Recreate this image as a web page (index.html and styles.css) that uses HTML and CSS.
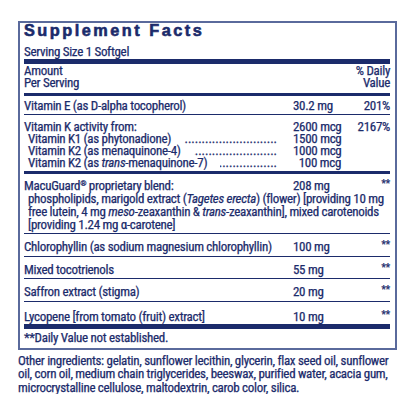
FILE: index.html
```html
<!DOCTYPE html>
<html lang="en">
<head>
<meta charset="utf-8">
<title>Supplement Facts</title>
<link rel="stylesheet" href="styles.css">
</head>
<body>
<div class="panel">
  <h1 class="title">Supplement Facts</h1>
  <div class="serving">Serving Size 1 Softgel</div>
  <div class="bar bar-thick"></div>
  <div class="head">
    <div>Amount<br>Per Serving</div>
    <div class="head-dv">% Daily<br>Value</div>
  </div>
  <div class="bar bar-med bar-head"></div>
  <div class="row row-e line">
    <span class="name">Vitamin E (as D-alpha tocopherol)</span>
    <span class="amt">30.2 mg</span>
    <span class="dv">201%</span>
  </div>
  <div class="group">
    <div class="row tight">
      <span class="name">Vitamin K activity from:</span>
      <span class="amt amt-r">2600 mcg</span>
      <span class="dv">2167%</span>
    </div>
    <div class="row tight">
      <span class="name lead"><span>Vitamin K1 (as phytonadione)</span><span class="dots">................................................................</span></span>
      <span class="amt amt-r">1500 mcg</span>
      <span class="dv"></span>
    </div>
    <div class="row tight">
      <span class="name lead"><span>Vitamin K2 (as menaquinone-4)</span><span class="dots">................................................................</span></span>
      <span class="amt amt-r">1000 mcg</span>
      <span class="dv"></span>
    </div>
    <div class="row tight">
      <span class="name lead"><span>Vitamin K2 (as <i>trans</i>-menaquinone-7)</span><span class="dots">................................................................</span></span>
      <span class="amt amt-r">100 mcg</span>
      <span class="dv"></span>
    </div>
  </div>
  <div class="bar bar-med"></div>
  <div class="blend line">
    <div class="row blend-row">
      <span class="name">MacuGuard<sup>®</sup> proprietary blend:</span>
      <span class="amt">208 mg</span>
      <span class="dv"><span class="star">**</span></span>
    </div>
    <p class="blend-text">phospholipids, marigold extract (<i>Tagetes erecta</i>) (flower) [providing 10 mg free lutein, 4 mg <i>meso</i>-zeaxanthin &amp; <i>trans</i>-zeaxanthin], mixed carotenoids [providing 1.24 mg α-carotene]</p>
  </div>
  <div class="row single line">
    <span class="name">Chlorophyllin (as sodium magnesium chlorophyllin)</span>
    <span class="amt">100 mg</span>
    <span class="dv"><span class="star">**</span></span>
  </div>
  <div class="row single line">
    <span class="name">Mixed tocotrienols</span>
    <span class="amt">55 mg</span>
    <span class="dv"><span class="star">**</span></span>
  </div>
  <div class="row single line">
    <span class="name">Saffron extract (stigma)</span>
    <span class="amt">20 mg</span>
    <span class="dv"><span class="star">**</span></span>
  </div>
  <div class="row single last">
    <span class="name">Lycopene [from tomato (fruit) extract]</span>
    <span class="amt">10 mg</span>
    <span class="dv"><span class="star">**</span></span>
  </div>
  <div class="bar bar-thick bar-foot"></div>
  <div class="foot">**Daily Value not established.</div>
</div>
<p class="other">Other ingredients: gelatin, sunflower lecithin, glycerin, flax seed oil, sunflower oil, corn oil, medium chain triglycerides, beeswax, purified water, acacia gum, microcrystalline cellulose, maltodextrin, carob color, silica.</p>
</body>
</html>
```

FILE: styles.css
```css
html, body {
  margin: 0;
  padding: 0;
  background: #ffffff;
}

body {
  font-family: "Roboto Condensed", "Roboto", sans-serif;
  font-stretch: condensed;
  font-size: 13px;
  line-height: 13px;
  letter-spacing: -0.3px;
  color: #1b2b6b;
  -webkit-text-stroke: 0.25px #1b2b6b;
}

.panel {
  box-sizing: border-box;
  width: 379px;
  margin: 21px 0 0 18px;
  border: 2px solid #5a6a9c;
  padding: 0 5px 4px 4px;
}

.title {
  margin: -1px 0 0 0;
  font-family: "Liberation Sans", Arial, sans-serif;
  font-stretch: normal;
  font-size: 16.3px;
  line-height: 16px;
  font-weight: 700;
  letter-spacing: 2.5px;
  -webkit-text-stroke: 0.6px #1b2b6b;
}

.serving {
  margin-top: 7px;
}

.bar {
  background: #1b2b6b;
}

.bar-thick {
  height: 5px;
  margin-top: 1px;
}

.bar-med {
  height: 3px;
}

.bar-head {
  margin-top: 3px;
}

.head {
  display: flex;
  justify-content: space-between;
  margin-top: 1px;
  line-height: 12.3px;
}

.head-dv {
  text-align: right;
}

.row {
  display: grid;
  grid-template-columns: 269px 1fr auto;
  align-items: baseline;
}

.line {
  border-bottom: 1px solid #1b2b6b;
}

.row-e {
  padding: 3px 0 2px;
}

.group {
  padding: 6px 0 1px;
}

.tight {
  line-height: 12.3px;
}

.lead {
  display: flex;
  padding-left: 4px;
  padding-right: 16px;
  white-space: nowrap;
}

.dots {
  flex: 1;
  min-width: 0;
  overflow: hidden;
  direction: rtl;
  margin-left: 13px;
  letter-spacing: 0;
}

.amt {
  justify-self: start;
  white-space: nowrap;
}

.amt-r {
  width: 48px;
  text-align: right;
}

.dv {
  text-align: right;
}

.star {
  font-size: 10px;
  letter-spacing: 0;
  vertical-align: 3px;
}

.blend {
  padding: 4.4px 0 2px;
  line-height: 12.8px;
}

.blend sup {
  font-size: 8px;
  line-height: 0;
  vertical-align: 4px;
}

.blend-text {
  margin: 0;
  padding-left: 4px;
}

.single {
  padding: 4px 0 2.5px;
}

.last {
  padding: 6px 0 0;
}

.bar-foot {
  margin-top: 1px;
}

.foot {
  padding-top: 2px;
}

.other {
  margin: 4px 0 0 18px;
  width: 379px;
  font-size: 13px;
  line-height: 13.5px;
}
```
